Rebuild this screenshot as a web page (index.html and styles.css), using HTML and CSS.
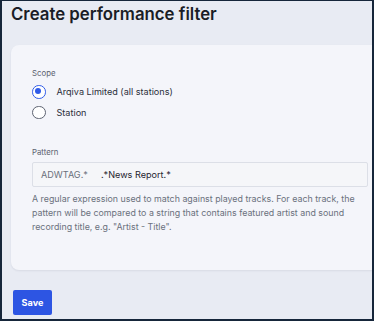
FILE: index.html
```
<!DOCTYPE html>
<html>
<head>
<meta charset="utf-8">
<link rel="stylesheet" href="styles.css">
</head>
<body>
<div class="frame">
  <h1 class="title">Create performance filter</h1>
  <div class="card">
    <div class="field scope">
      <div class="label">Scope</div>
      <label class="radio-row">
        <span class="radio checked"></span>
        <span class="radio-text">Arqiva Limited (all stations)</span>
      </label>
      <label class="radio-row">
        <span class="radio"></span>
        <span class="radio-text">Station</span>
      </label>
    </div>
    <div class="field pattern">
      <div class="label">Pattern</div>
      <div class="input">
        <span class="prefix">ADWTAG.*</span>
        <span class="value">.*News Report.*</span>
      </div>
      <p class="help">A regular expression used to match against played tracks. For each track, the pattern will be compared to a string that contains featured artist and sound recording title, e.g. "Artist - Title".</p>
    </div>
  </div>
  <button class="save">Save</button>
</div>
</body>
</html>
```
FILE: styles.css
```
html, body {
  margin: 0;
  padding: 0;
}
body {
  width: 374px;
  height: 321px;
  overflow: hidden;
  font-family: Inter, "Noto Sans", sans-serif;
}
.frame {
  box-sizing: border-box;
  width: 374px;
  height: 321px;
  background: #e8ebf3;
  border-style: solid;
  border-color: #16263a;
  border-width: 1px 2px 2px 2px;
  padding: 0 0 0 9px;
  overflow: hidden;
}
.title {
  margin: 0;
  padding-top: 3px;
  height: 44px;
  box-sizing: border-box;
  font-size: 16.8px;
  font-weight: 600;
  color: #1a1d26;
}
.card {
  box-sizing: border-box;
  height: 225px;
  margin-right: -10px;
  background: #f4f5fa;
  border-radius: 8px;
  box-shadow: 0 1px 2px rgba(20, 30, 60, 0.08);
  padding: 23px 14px 0 21px;
}
.label {
  font-size: 7.8px;
  line-height: 10px;
  color: #5b6270;
}
.scope .label {
  margin-bottom: 3.5px;
}
.radio-row {
  display: flex;
  align-items: center;
  gap: 11px;
  height: 20.5px;
}
.radio {
  box-sizing: border-box;
  width: 13.5px;
  height: 13.5px;
  border: 1.5px solid #5e6472;
  border-radius: 50%;
  background: #fff;
  position: relative;
  flex: none;
}
.radio.checked {
  border-color: #2f5be8;
}
.radio.checked::after {
  content: "";
  position: absolute;
  left: 2.25px;
  top: 2.25px;
  width: 6px;
  height: 6px;
  border-radius: 50%;
  background: #2f5be8;
}
.radio-text {
  font-size: 9.1px;
  color: #2a2f3a;
}
.pattern {
  margin-top: 24px;
}
.pattern .label {
  margin-bottom: 5px;
}
.input {
  box-sizing: border-box;
  height: 25px;
  border: 1px solid #dcdfe7;
  border-radius: 2px;
  background: #f5f6f9;
  display: flex;
  align-items: center;
  padding-left: 8px;
  font-size: 9.1px;
}
.prefix {
  color: #6a707c;
  flex: 0 0 60px;
}
.value {
  color: #1f2430;
}
.help {
  margin: 5px 0 0 0;
  font-size: 8.85px;
  line-height: 14px;
  color: #6b717d;
}
.save {
  display: block;
  margin-top: 20px;
  margin-left: 2px;
  width: 39px;
  height: 25px;
  border: none;
  border-radius: 2px;
  background: #2d55e3;
  color: #fff;
  font-family: Inter, sans-serif;
  font-size: 9.1px;
  font-weight: 700;
  padding: 0;
}
```
